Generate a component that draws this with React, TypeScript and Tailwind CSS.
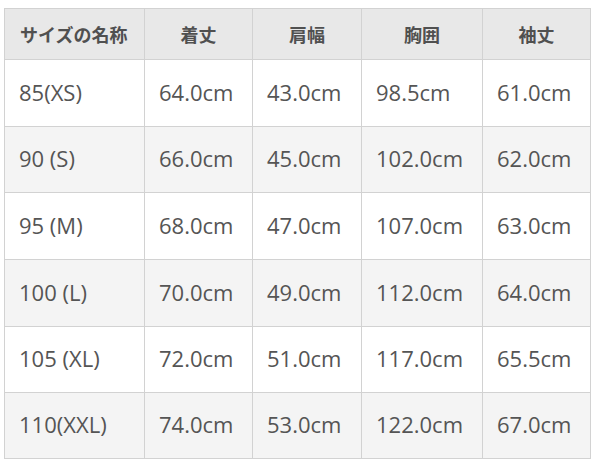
const HEADERS = ['サイズの名称', '着丈', '肩幅', '胸囲', '袖丈'];

const ROWS = [
  ['85(XS)', '64.0cm', '43.0cm', '98.5cm', '61.0cm'],
  ['90 (S)', '66.0cm', '45.0cm', '102.0cm', '62.0cm'],
  ['95 (M)', '68.0cm', '47.0cm', '107.0cm', '63.0cm'],
  ['100 (L)', '70.0cm', '49.0cm', '112.0cm', '64.0cm'],
  ['105 (XL)', '72.0cm', '51.0cm', '117.0cm', '65.5cm'],
  ['110(XXL)', '74.0cm', '53.0cm', '122.0cm', '67.0cm'],
];

// row heights between the 1px grid lines
const HEIGHTS = ['h-[66px]', 'h-[65px]', 'h-[66px]', 'h-[66px]', 'h-[65px]', 'h-[65px]'];

export default function App() {
  return (
    <div className="w-[600px] h-[468px] bg-white pt-2 pl-1 font-['Open_Sans','Noto_Sans_CJK_JP',sans-serif]">
      <div className="grid w-fit grid-cols-[139px_107px_108px_120px_107px] gap-px bg-[#d2d2d2] p-px">
        {HEADERS.map((h, i) => (
          <div
            key={h}
            className={`h-[50px] flex items-center bg-[#e8e8e8] text-[18px] font-bold text-[#505050] font-['Noto_Sans_CJK_JP',sans-serif] ${
              i === 0 ? 'pl-[15px]' : 'justify-center'
            }`}
          >
            {h}
          </div>
        ))}
        {ROWS.map((row, r) =>
          row.map((cell, c) => (
            <div
              key={`${r}-${c}`}
              className={`${HEIGHTS[r]} flex items-center pl-[14px] pb-[2px] text-[22px] text-[#555] ${
                r % 2 === 1 ? 'bg-[#f4f4f4]' : 'bg-white'
              }`}
            >
              {cell}
            </div>
          ))
        )}
      </div>
    </div>
  );
}
